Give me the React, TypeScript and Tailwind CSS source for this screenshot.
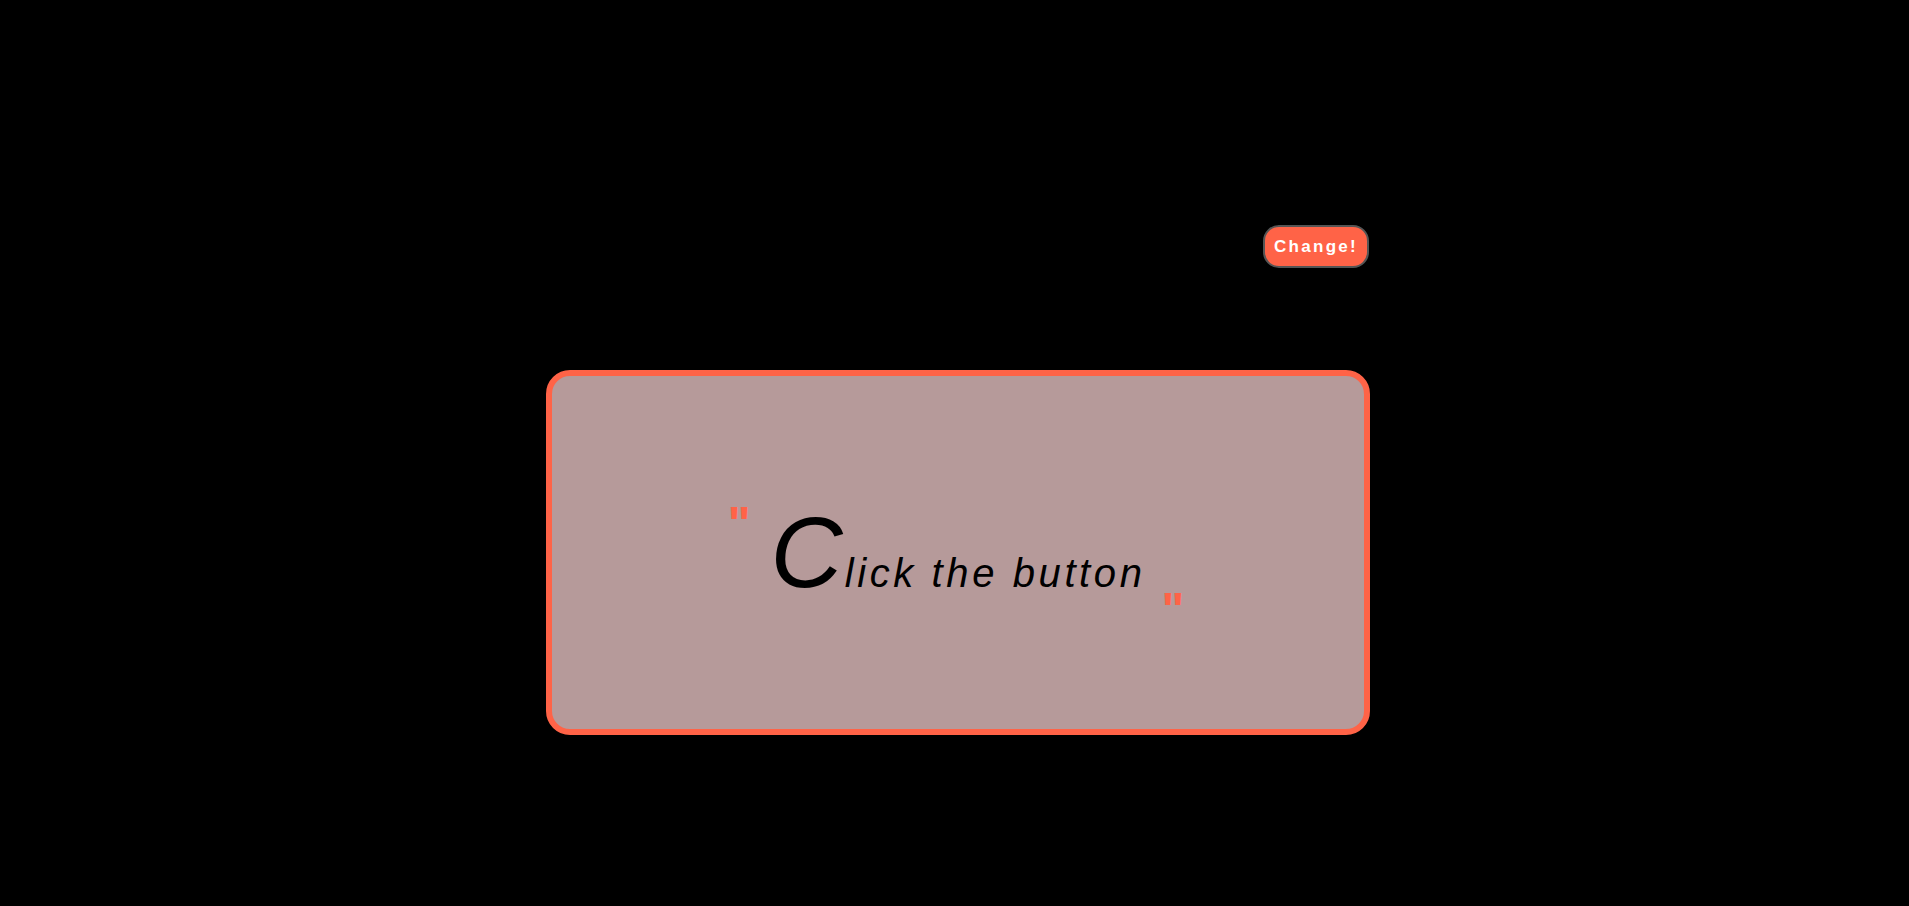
export default function App() {
  return (
    <div
      className="min-h-screen w-full bg-black pt-[225px] pl-[7px]"
      style={{ fontFamily: '"Liberation Sans", Arial, sans-serif' }}
    >
      <div className="mx-auto w-[824px]">
        <div className="flex justify-end pr-[1px]">
          <button className="h-[43px] w-[106px] rounded-[16px] border-2 border-[#555555] bg-[#ff6347] text-[17px] font-bold tracking-[2.3px] text-white">
            Change!
          </button>
        </div>
        <div className="mt-[102px] flex h-[365px] items-center justify-center rounded-[24px] border-[6px] border-[#ff6347] bg-[#b69a9a] pr-[4px]">
          <div className="flex items-stretch">
            <span className="self-start translate-y-[12px] text-[48px] font-bold leading-[20px] text-[#ff6347]">"</span>
            <p className="ml-[20px] flex items-baseline italic text-black">
              <span className="text-[100px] leading-none">C</span>
              <span className="ml-[2px] text-[40px] tracking-[3.6px]">lick the button</span>
            </p>
            <span className="ml-[16px] self-end translate-y-[17px] text-[48px] font-bold leading-[20px] text-[#ff6347]">"</span>
          </div>
        </div>
      </div>
    </div>
  );
}
